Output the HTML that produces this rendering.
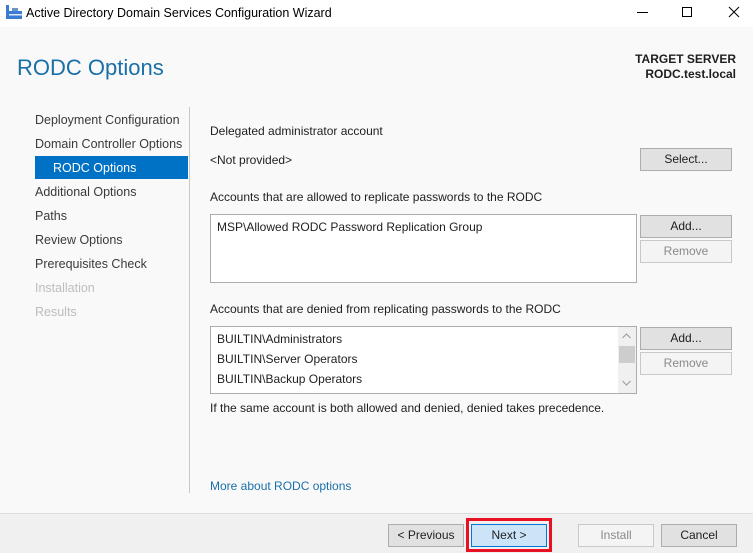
<!DOCTYPE html>
<html><head><meta charset="utf-8"><style>
*{margin:0;padding:0;box-sizing:border-box}
body{width:753px;height:553px;overflow:hidden;background:#f9f9f9;font-family:"Liberation Sans",sans-serif;font-size:12px;color:#1e1e1e;position:relative}
.a{position:absolute}
.title{top:0;left:0;width:753px;height:27px;background:#fff}
.btn{position:absolute;background:#e1e1e1;border:1px solid #adadad;text-align:center;line-height:20px;font-size:12px;color:#1e1e1e}
.dis{background:#f4f4f4;border-color:#c8c8c8;color:#8a8a8a}
.nav{position:absolute;left:35px;font-size:12.5px;color:#3a3a3a}
.list{position:absolute;background:#fff;border:1px solid #adadad}
</style></head><body>
<div class="a title">
<svg class="a" style="left:6px;top:5px" width="16" height="16"><rect x="0" y="0" width="3" height="14" fill="#3a7bd5"/><rect x="3" y="6" width="13" height="8" fill="#3a7bd5"/><rect x="6" y="3" width="6" height="3" fill="#6a95c8"/><rect x="3" y="9" width="13" height="1.5" fill="#dde8f5"/></svg>
<div class="a" style="left:26px;top:6px;font-size:12.5px;color:#000">Active Directory Domain Services Configuration Wizard</div>
<div class="a" style="left:637px;top:12px;width:11px;height:1px;background:#000"></div>
<div class="a" style="left:682px;top:7px;width:10px;height:10px;border:1px solid #000"></div>
<svg class="a" style="left:728px;top:6px" width="12" height="12"><path d="M1 1L11 11M11 1L1 11" stroke="#000" stroke-width="1"/></svg>
</div>
<div class="a" style="left:17px;top:55px;font-size:22px;color:#1a6fa8">RODC Options</div>
<div class="a" style="right:17px;top:52px;font-size:12px;font-weight:bold;color:#1e1e1e;text-align:right;line-height:15px">TARGET SERVER<br>RODC.test.local</div>

<div class="a" style="left:189px;top:107px;width:1px;height:386px;background:#c8c8c8"></div>
<div class="a" style="left:35px;top:156px;width:153px;height:23px;background:#0072c6"></div>
<div class="nav" style="top:113px">Deployment Configuration</div>
<div class="nav" style="top:137px">Domain Controller Options</div>
<div class="nav" style="top:161px;left:53px;color:#fff">RODC Options</div>
<div class="nav" style="top:185px">Additional Options</div>
<div class="nav" style="top:209px">Paths</div>
<div class="nav" style="top:233px">Review Options</div>
<div class="nav" style="top:257px">Prerequisites Check</div>
<div class="nav" style="top:281px;color:#bdbdbd">Installation</div>
<div class="nav" style="top:305px;color:#bdbdbd">Results</div>

<div class="a" style="left:210px;top:124px">Delegated administrator account</div>
<div class="a" style="left:210px;top:153px">&lt;Not provided&gt;</div>
<div class="btn" style="left:640px;top:148px;width:92px;height:23px">Select...</div>
<div class="a" style="left:210px;top:190px">Accounts that are allowed to replicate passwords to the RODC</div>
<div class="list" style="left:210px;top:214px;width:427px;height:69px"><div style="padding:5px 6px">MSP\Allowed RODC Password Replication Group</div></div>
<div class="btn" style="left:640px;top:215px;width:92px;height:23px">Add...</div>
<div class="btn dis" style="left:640px;top:240px;width:92px;height:23px">Remove</div>
<div class="a" style="left:210px;top:302px">Accounts that are denied from replicating passwords to the RODC</div>
<div class="list" style="left:210px;top:326px;width:427px;height:68px;line-height:20px;padding:2px 6px">BUILTIN\Administrators<br>BUILTIN\Server Operators<br>BUILTIN\Backup Operators
<div class="a" style="right:0;top:0;width:18px;height:66px;background:#f0f0f0"></div>
<div class="a" style="right:1px;top:19px;width:16px;height:17px;background:#cdcdcd"></div>
<svg class="a" style="right:5px;top:6px" width="9" height="6"><path d="M0.5 5L4.5 1L8.5 5" fill="none" stroke="#999"/></svg>
<svg class="a" style="right:5px;top:53px" width="9" height="6"><path d="M0.5 1L4.5 5L8.5 1" fill="none" stroke="#999"/></svg>
</div>
<div class="btn" style="left:640px;top:327px;width:92px;height:23px">Add...</div>
<div class="btn dis" style="left:640px;top:352px;width:92px;height:23px">Remove</div>
<div class="a" style="left:210px;top:401px">If the same account is both allowed and denied, denied takes precedence.</div>
<div class="a" style="left:210px;top:479px;color:#1a6fa8">More about RODC options</div>

<div class="a" style="left:0;top:513px;width:753px;height:40px;background:#f0f0f0;border-top:1px solid #dcdcdc"></div>
<div class="btn" style="left:388px;top:524px;width:76px;height:23px">&lt; Previous</div>
<div class="a" style="left:466px;top:518px;width:86px;height:34px;border:3px solid #e81123"></div>
<div class="btn" style="left:471px;top:524px;width:76px;height:23px;background:#cce4f7;border-color:#0078d7">Next &gt;</div>
<div class="btn dis" style="left:578px;top:524px;width:76px;height:23px">Install</div>
<div class="btn" style="left:661px;top:524px;width:76px;height:23px">Cancel</div>
</body></html>
